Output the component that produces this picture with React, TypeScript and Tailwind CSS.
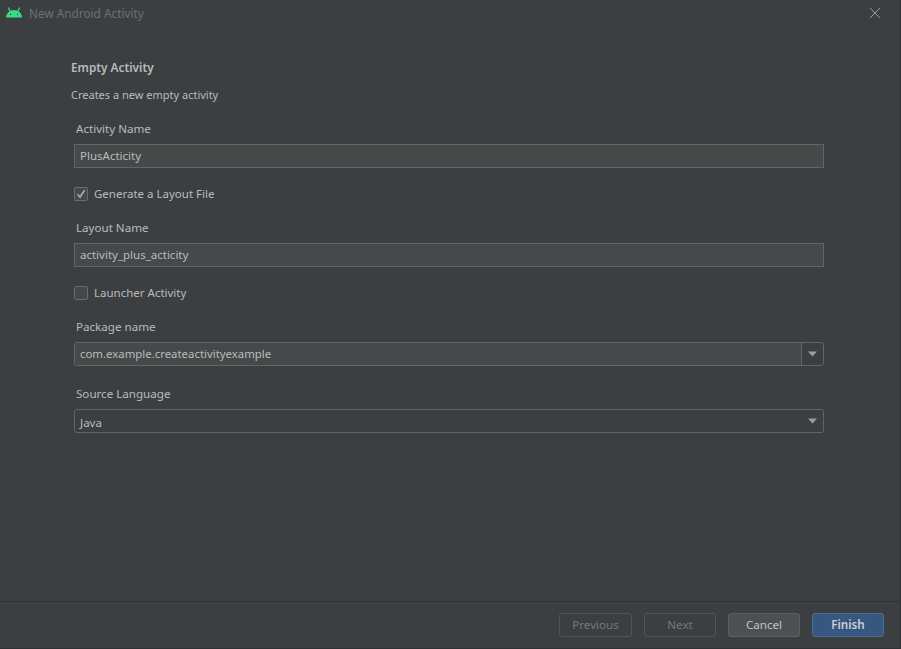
const font = "font-['Noto_Sans','Noto_Sans_CJK_KR',sans-serif]";

function Label({ children }: { children: string }) {
  return <div className="h-[17px] pl-[2px] text-[11.6px] leading-[17px] text-[#bbbbbb]">{children}</div>;
}

function TextField({ value }: { value: string }) {
  return (
    <div className="mt-[7px] h-6 w-[750px] border border-[#646464] bg-[#45494a] pl-[5px] text-[11.5px] leading-[22px] text-[#bbbbbb]">
      {value}
    </div>
  );
}

function Arrow() {
  return (
    <svg width="9" height="6" viewBox="0 0 9 6">
      <path d="M0 0.5h9L4.5 5.5z" fill="#9a9d9e" />
    </svg>
  );
}

function Check({ label, checked }: { label: string; checked?: boolean }) {
  return (
    <div className="flex h-[17px] items-center gap-[6px]">
      <div className="flex size-[14px] items-center justify-center rounded-[2px] border border-[#6b6b6b] bg-[#43494a]">
        {checked && (
          <svg width="10" height="10" viewBox="0 0 10 10">
            <path d="M1.500 5.200 4 8 8.600 1.200" fill="none" stroke="#a7a7a7" strokeWidth="1.700" />
          </svg>
        )}
      </div>
      <span className="text-[11.5px] leading-[15px] text-[#bbbbbb]">{label}</span>
    </div>
  );
}

function Button({ label, className }: { label: string; className: string }) {
  return (
    <div className={`flex h-6 items-center justify-center rounded-[3px] border text-[11.6px] ${className}`}>
      {label}
    </div>
  );
}

export default function App() {
  return (
    <div className={`flex h-[649px] w-[901px] flex-col border-r border-b border-[#2f3133] bg-[#3c3f41] ${font}`}>
      <div className="flex h-[28px] items-center pl-[5px] pr-[19px]">
        <svg width="18" height="12" viewBox="0 0 18 12" className="mb-[5px]">
          <path d="M1 11.500C1.200 7.500 4.500 4 9 4s7.800 3.500 8 7.500z" fill="#3ddc84" />
          <path d="M4.800 5 3.500 1.500M13.200 5l1.300-3.500" stroke="#3ddc84" strokeWidth="1.200" />
          <circle cx="5.500" cy="8.500" r="0.700" fill="#3c3f41" />
          <circle cx="12.500" cy="8.500" r="0.700" fill="#3c3f41" />
        </svg>
        <span className="ml-[6px] text-[11.8px] text-[#6e7072]">New Android Activity</span>
        <svg width="12" height="12" viewBox="0 0 12 12" className="ml-auto mb-[3px]">
          <path d="M1 1l10 10M11 1 1 11" stroke="#9a9c9e" strokeWidth="1" />
        </svg>
      </div>

      <div className="flex flex-1 flex-col pl-[74px]">
        <div className="-ml-[3px] mt-[30px] h-[18px] text-[11.8px] leading-[18px] font-semibold text-[#bbbbbb]">Empty Activity</div>
        <div className="-ml-[3px] mt-[11px] h-[16px] text-[11px] leading-[16px] text-[#bbbbbb]">Creates a new empty activity</div>

        <div className="mt-[17px]"><Label>Activity Name</Label></div>
        <TextField value="PlusActicity" />
        <div className="mt-[17px]"><Check label="Generate a Layout File" checked /></div>

        <div className="mt-[17px]"><Label>Layout Name</Label></div>
        <TextField value="activity_plus_acticity" />
        <div className="mt-[17px]"><Check label="Launcher Activity" /></div>

        <div className="mt-[17px]"><Label>Package name</Label></div>
        <div className="mt-[7px] flex h-6 w-[750px] rounded-[3px] border border-[#646464]">
          <div className="flex-1 rounded-l-[3px] bg-[#45494a] pl-[5px] text-[11.4px] leading-[22px] text-[#bbbbbb]">com.example.createactivityexample</div>
          <div className="flex w-[22px] items-center justify-center border-l border-[#646464]"><Arrow /></div>
        </div>

        <div className="mt-[19px]"><Label>Source Language</Label></div>
        <div className="mt-[7px] flex h-6 w-[750px] rounded-[3px] border border-[#646464] pr-[6px] text-[11.5px] text-[#bbbbbb]">
          <span className="flex-1 pl-[5px] leading-[25px]">Java</span>
          <span className="flex items-center"><Arrow /></span>
        </div>
      </div>

      <div className="flex h-[47px] justify-end gap-3 border-t border-[#323232] pr-4 pt-[11px]">
        <Button label="Previous" className="w-[73px] border-[#535658] text-[#777777]" />
        <Button label="Next" className="w-[72px] border-[#535658] text-[#777777]" />
        <Button label="Cancel" className="w-[72px] border-[#5e6060] bg-[#4c5052] text-[#c4c4c4]" />
        <Button label="Finish" className="w-[72px] border-[#4c708c] bg-[#365880] font-semibold text-[#d0d0d0]" />
      </div>
    </div>
  );
}
